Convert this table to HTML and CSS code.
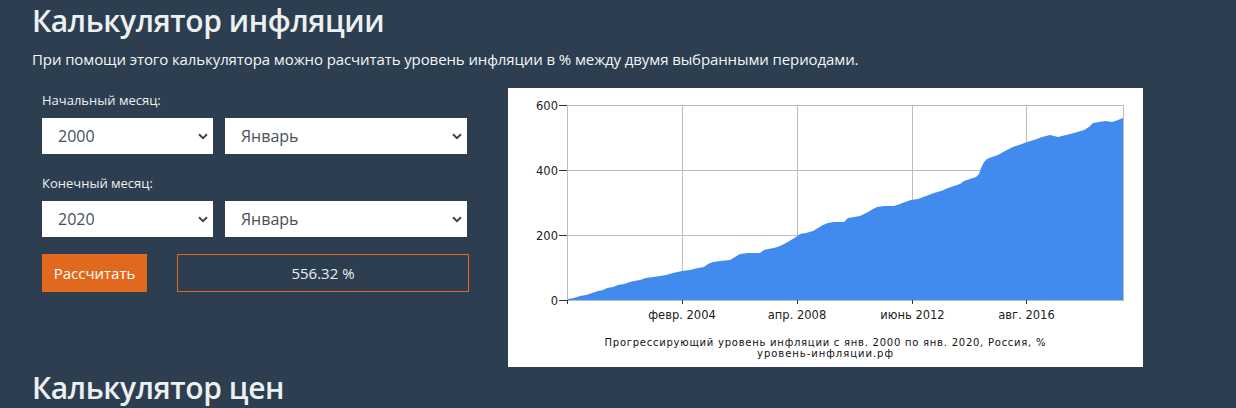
FILE: index.html
```html
<!DOCTYPE html>
<html lang="ru">
<head>
<meta charset="utf-8">
<title>Калькулятор инфляции</title>
<link rel="stylesheet" href="styles.css">
</head>
<body>
<div class="page">
  <h1 class="title">Калькулятор инфляции</h1>
  <p class="lead">При помощи этого калькулятора можно расчитать уровень инфляции в % между двумя выбранными периодами.</p>
  <div class="main">
    <form class="calc">
      <div class="label">Начальный месяц:</div>
      <div class="selects">
        <div class="select"><span>2000</span><svg class="chev" width="10" height="7" viewBox="0 0 10 7"><path d="M1 1.2 L5 5.2 L9 1.2" fill="none" stroke="#444" stroke-width="2"/></svg></div>
        <div class="select"><span>Январь</span><svg class="chev" width="10" height="7" viewBox="0 0 10 7"><path d="M1 1.2 L5 5.2 L9 1.2" fill="none" stroke="#444" stroke-width="2"/></svg></div>
      </div>
      <div class="label second">Конечный месяц:</div>
      <div class="selects">
        <div class="select"><span>2020</span><svg class="chev" width="10" height="7" viewBox="0 0 10 7"><path d="M1 1.2 L5 5.2 L9 1.2" fill="none" stroke="#444" stroke-width="2"/></svg></div>
        <div class="select"><span>Январь</span><svg class="chev" width="10" height="7" viewBox="0 0 10 7"><path d="M1 1.2 L5 5.2 L9 1.2" fill="none" stroke="#444" stroke-width="2"/></svg></div>
      </div>
      <div class="actions">
        <button type="button" class="btn">Рассчитать</button>
        <div class="result">556.32 %</div>
      </div>
    </form>
    <div class="chart">
      <svg width="635" height="279" viewBox="0 0 635 279">
        <rect x="0" y="0" width="635" height="279" fill="#fff"/>
        <g stroke="#bdbdbd" stroke-width="1" fill="none">
          <line x1="59.5" y1="17.5" x2="615.5" y2="17.5"/>
          <line x1="59.5" y1="82.5" x2="615.5" y2="82.5"/>
          <line x1="59.5" y1="147.5" x2="615.5" y2="147.5"/>
          <line x1="174.5" y1="17" x2="174.5" y2="212"/>
          <line x1="289.5" y1="17" x2="289.5" y2="212"/>
          <line x1="404.5" y1="17" x2="404.5" y2="212"/>
          <line x1="518.5" y1="17" x2="518.5" y2="212"/>
          <line x1="615.5" y1="17" x2="615.5" y2="212"/>
        </g>
        <polygon fill="#428bee" points="60,212 60,211 66,210 72,208 78,207 84,205 90,203 95,202 99,200 105,199 110,197 116,196 122,194 126,193 132,192 138,190 145,189 152,188 158,187 165,185 174,183 182,182 190,180 196,179 200,176 205,174 212,173 222,172 227,169 232,166 240,165 252,165 256,162 260,161 266,160 272,158 278,155 283,152 288,149 292,146 298,145 305,143 310,140 315,137 320,135 326,134 336,134 340,130 346,129 352,128 356,126 360,124 365,121 369,119 376,118 386,118 392,116 397,114 403,112 410,111 418,108 426,105 433,103 440,100 446,98 452,96 456,93 462,91 468,89 471,86 473,80 476,74 479,71 484,69 490,67 497,63 505,59 511,57 519,54 526,52 534,49 542,47 550,49 558,47 566,45 576,42 581,39 585,35 591,34 598,33 604,34 610,32 615,30 615,212"/>
        <g stroke="#bdbdbd" stroke-width="1" fill="none">
          <line x1="59.5" y1="17" x2="59.5" y2="212"/>
          <line x1="59" y1="212.5" x2="616" y2="212.5"/>
        </g>
        <g stroke="#333" stroke-width="1">
          <line x1="51" y1="17.5" x2="59" y2="17.5"/>
          <line x1="51" y1="82.5" x2="59" y2="82.5"/>
          <line x1="51" y1="147.5" x2="59" y2="147.5"/>
          <line x1="51" y1="212.5" x2="59" y2="212.5"/>
          <line x1="59.5" y1="212" x2="59.5" y2="216"/>
          <line x1="174.5" y1="212" x2="174.5" y2="216"/>
          <line x1="289.5" y1="212" x2="289.5" y2="216"/>
          <line x1="404.5" y1="212" x2="404.5" y2="216"/>
          <line x1="518.5" y1="212" x2="518.5" y2="216"/>
        </g>
        <g class="ax" text-anchor="end">
          <text x="50" y="21.5">600</text>
          <text x="50" y="86.5">400</text>
          <text x="50" y="151.5">200</text>
          <text x="50" y="216.5">0</text>
        </g>
        <g class="ax" text-anchor="middle">
          <text x="174" y="231">февр. 2004</text>
          <text x="289" y="231">апр. 2008</text>
          <text x="404.5" y="231">июнь 2012</text>
          <text x="518.5" y="231">авг. 2016</text>
        </g>
        <g class="cap">
          <text x="96.5" y="257.5" textLength="441" lengthAdjust="spacing">Прогрессирующий уровень инфляции с янв. 2000 по янв. 2020, Россия, %</text>
          <text x="249" y="268.5" textLength="136" lengthAdjust="spacing">уровень-инфляции.рф</text>
        </g>
      </svg>
    </div>
  </div>
  <h1 class="title next">Калькулятор цен</h1>
</div>
</body>
</html>
```

FILE: styles.css
```css
html, body {
  margin: 0;
  padding: 0;
}
body {
  background: #2c3e50;
  color: #ecf0f1;
  font-family: "Open Sans", "Noto Sans", sans-serif;
  overflow: hidden;
}
.page {
  padding: 3px 32px 0;
}
.title {
  margin: 0;
  font-size: 30px;
  font-weight: 600;
  line-height: 36px;
  letter-spacing: -0.4px;
  color: #ecf0f1;
}
.title.next {
  margin-top: 3px;
}
.lead {
  margin: 9px 0 0;
  font-size: 15px;
  line-height: 22px;
  letter-spacing: -0.1px;
  color: #f4f6f7;
}
.main {
  display: flex;
  margin-top: 18px;
  gap: 39px;
}
.calc {
  width: 427px;
  margin: 0;
  padding: 2px 0 0 10px;
}
.label {
  font-size: 13px;
  line-height: 20px;
  color: #ecf0f1;
}
.label.second {
  margin-top: 19px;
}
.selects {
  display: grid;
  grid-template-columns: 171px 242px;
  gap: 12px;
  margin-top: 8px;
}
.select {
  height: 36px;
  background: #fff;
  color: #495057;
  font-size: 16px;
  display: flex;
  align-items: center;
  justify-content: space-between;
  padding: 0 5px 0 16px;
}
.chev {
  display: block;
  margin-top: 1px;
}
.actions {
  display: flex;
  gap: 30px;
  margin-top: 17px;
}
.btn {
  width: 105px;
  height: 38px;
  border: 0;
  padding: 0;
  background: #e0691d;
  color: #fff;
  font-family: "Open Sans", "Noto Sans", sans-serif;
  font-size: 15px;
}
.result {
  flex: 1;
  height: 38px;
  box-sizing: border-box;
  border: 1px solid #e0691d;
  display: flex;
  align-items: center;
  justify-content: center;
  font-size: 15px;
  color: #ecf0f1;
}
.chart {
  width: 635px;
  height: 279px;
}
.chart svg {
  display: block;
}
.ax {
  font-family: "DejaVu Sans", sans-serif;
  font-size: 11.5px;
  fill: #222;
}
.cap {
  font-family: "DejaVu Sans", sans-serif;
  font-size: 10px;
  fill: #111;
}
```
